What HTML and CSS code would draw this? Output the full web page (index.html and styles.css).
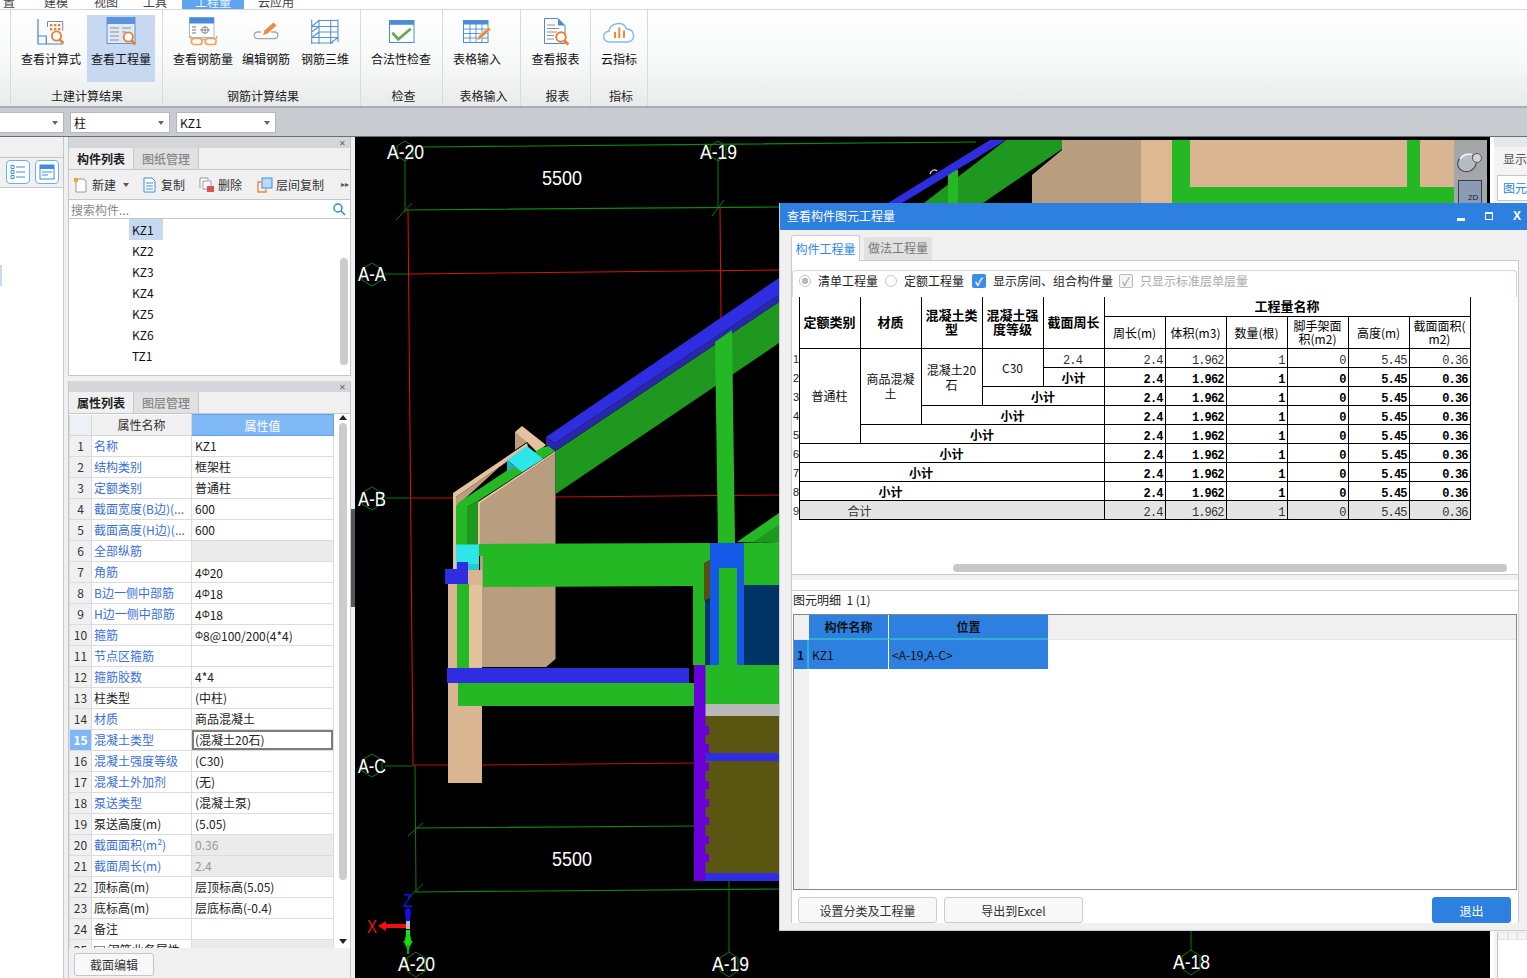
FILE: index.html
```html
<!DOCTYPE html>
<html lang="zh">
<head>
<meta charset="utf-8">
<title>查看构件图元工程量</title>
<link rel="stylesheet" href="styles.css">
</head>
<body>
<div class="app">
  <div class="menubar">
    <span class="mi m0">置</span><span class="mi m1">建模</span><span class="mi m2">视图</span><span class="mi m3">工具</span><span class="mi m4 active">工程量</span><span class="mi m5">云应用</span>
  </div>
  <div class="ribbon">
    <div class="group g1">
      <div class="btns">
        <div class="rb w72"><svg class="ic" viewBox="0 0 32 30"><path d="M3 2v25h25M3 19h8.300v8" fill="none" stroke="#3f86d8" stroke-width="1.2"/><path d="M12.500 10V4.500h15.200V14" fill="none" stroke="#6d8fb8"/><g fill="#e8823a"><rect x="15" y="7" width="2.400" height="2.400"/><rect x="19" y="7" width="2.400" height="2.400"/><rect x="23" y="7" width="2.400" height="2.400"/><rect x="15" y="11" width="2.400" height="2.400"/><rect x="19" y="11" width="2.400" height="2.400"/><rect x="23" y="11" width="2.400" height="2.400"/></g><circle cx="21.500" cy="19" r="4.600" fill="#fff" stroke="#e8823a" stroke-width="1.900"/><path d="M24.800 22.500l3.700 4" stroke="#e8823a" stroke-width="2.600"/></svg><span>查看计算式</span></div>
        <div class="rb w68 on"><svg class="ic" viewBox="0 0 32 30"><rect x="2" y="0.500" width="28" height="26" fill="#dfe8f4" stroke="#5a94dc"/><rect x="2" y="0.500" width="28" height="6.500" fill="#5a94dc"/><path d="M5 11h9M5 15h9M5 19h9M5 23h9M17 11h9M17 15h4" stroke="#8a8f96"/><circle cx="23.300" cy="20" r="4.600" fill="#fff" stroke="#e8823a" stroke-width="1.900"/><path d="M26.500 23.500l3.700 4" stroke="#e8823a" stroke-width="2.600"/></svg><span>查看工程量</span></div>
      </div>
      <div class="glabel">土建计算结果</div>
    </div>
    <div class="group g2">
      <div class="btns">
        <div class="rb w66"><svg class="ic" viewBox="0 0 32 30"><rect x="2.500" y="0.500" width="24.500" height="20" fill="#fff" stroke="#9db8da"/><rect x="2.500" y="0.500" width="24.500" height="6" fill="#4a8cd8"/><path d="M5 10h4M5 13h4M5 16h4" stroke="#777"/><path d="M13 13h10M18 9v8" stroke="#888"/><rect x="15" y="10" width="6" height="6" rx="2" fill="none" stroke="#888"/><rect x="4.500" y="21.500" width="10.500" height="6" rx="2.500" fill="#fff" stroke="#f5a060" stroke-width="1.700"/><rect x="18.500" y="21.500" width="10.500" height="6" rx="2.500" fill="#fff" stroke="#f5a060" stroke-width="1.700"/><path d="M15 22.500h3.500M4.500 22l-1-3M29 22l1-3" stroke="#f5a060" stroke-width="1.500" fill="none"/></svg><span>查看钢筋量</span></div>
        <div class="rb w60"><svg class="ic" viewBox="0 0 32 30"><path d="M11 15H7.500a3.300 3.300 0 0 0 0 6.600h17a3.300 3.300 0 0 0 0-6.600H21" fill="none" stroke="#a4a8ac" stroke-width="1.300"/><path d="M13 18l1.500-4.500 9-8 3 3-9 8z" fill="#ee8a3a"/></svg><span>编辑钢筋</span></div>
        <div class="rb w58"><svg class="ic" viewBox="0 0 32 30"><path d="M2.700 2.500V27M10 2.500V27M21.700 2.500V27M29 2.500V25M10 3.500H29M2.700 9.500H29M10 15H29M2.700 20.500H29M2.700 26H24M2.700 9.500L10 3.500M2.700 20.500L10 15M2.700 15L10 9.500M21.700 26L29 20.500" fill="none" stroke="#5a92d6" stroke-width="1.100"/></svg><span>钢筋三维</span></div>
      </div>
      <div class="glabel">钢筋计算结果</div>
    </div>
    <div class="group g3">
      <div class="btns">
        <div class="rb w80"><svg class="ic" viewBox="0 0 32 30"><rect x="4.500" y="3.500" width="24.500" height="22" fill="#fff" stroke="#4a8cd8"/><rect x="4.500" y="3.500" width="24.500" height="4.300" fill="#4a8cd8"/><path d="M7.300 15.700l6 6.600 12.400-10.600" fill="none" stroke="#6fa84f" stroke-width="2.800"/></svg><span>合法性检查</span></div>
      </div>
      <div class="glabel">检查</div>
    </div>
    <div class="group g4">
      <div class="btns">
        <div class="rb w68"><svg class="ic" viewBox="0 0 32 30"><rect x="2.500" y="3.500" width="24.500" height="22" fill="#fff" stroke="#4a8cd8"/><rect x="2.500" y="3.500" width="24.500" height="4" fill="#4a8cd8"/><path d="M2.500 12h24.500M2.500 16.500h24.500M2.500 21h24.500M9 7v18.500M15 7v18.500M21 7v18.500" stroke="#4a8cd8" stroke-width=".9"/><path d="M15.500 24l2-5 10-9 2.500 2.500-10 9z" fill="#ee8a3a" stroke="#fff" stroke-width=".5"/></svg><span>表格输入</span></div>
      </div>
      <div class="glabel">表格输入</div>
    </div>
    <div class="group g5">
      <div class="btns">
        <div class="rb wfull"><svg class="ic" viewBox="0 0 32 30"><path d="M4.500 1.500h13.500l7 7v18H4.500z" fill="#fff" stroke="#4a8cd8"/><path d="M18 1.500l7 7h-7z" fill="#4a8cd8"/><path d="M7 8h8M7 11.500h12M7 15h10M7 18.500h7M7 22h7" stroke="#8a8f96"/><circle cx="21" cy="20" r="4.800" fill="#fff" stroke="#ee7a30" stroke-width="1.900"/><path d="M24.300 23.500l4 4" stroke="#ee7a30" stroke-width="2.600"/></svg><span>查看报表</span></div>
      </div>
      <div class="glabel">报表</div>
    </div>
    <div class="group g6">
      <div class="btns">
        <div class="rb wfull"><svg class="ic" viewBox="0 0 32 30"><path d="M7 25c-8 0-8.500-10-1-10.800C7 6.500 20 3 23.500 12c9-.5 9.500 13 1 13z" fill="#fff" stroke="#7fbcf0" stroke-width="1.500"/><path d="M12 21v-6M16.300 21V10.500M21 21v-7.500" stroke="#ee8a3a" stroke-width="2"/></svg><span>云指标</span></div>
      </div>
      <div class="glabel">指标</div>
    </div>
  </div>
  <div class="selbar">
    <div class="sel s0"></div>
    <div class="sel s1">柱</div>
    <div class="sel s2">KZ1</div>
  </div>
  <div class="main">
    <aside class="side">
      <div class="side-top"></div>
      <div class="side-tools">
        <span class="stool"><svg viewBox="0 0 24 24" width="24" height="24"><path d="M10 7h9M10 12h9M10 17h9" stroke="#3b8ee0"/><path d="M5 5.500h3v3H5zM5 10.500h3v3H5zM5 15.500h3v3H5z" fill="none" stroke="#3b8ee0"/></svg></span>
        <span class="stool"><svg viewBox="0 0 24 24" width="24" height="24"><rect x="5" y="5" width="14" height="14" fill="#fff" stroke="#3b8ee0"/><rect x="5" y="5" width="14" height="4" fill="#3b8ee0"/><path d="M7 12h10M7 15h6" stroke="#3b8ee0"/></svg></span>
      </div>
      <div class="side-list"><div class="side-mark"></div></div>
    </aside>
    <div class="panels">
      <section class="panel p1">
        <div class="phead">✕</div>
        <div class="ptabs"><span class="ptab on">构件列表</span><span class="ptab">图纸管理</span></div>
        <div class="ptools">
          <span class="pt t1"><svg viewBox="0 0 16 16" width="16" height="16"><path d="M3 2h8l2 2v11H3z" fill="#fff" stroke="#999"/><rect x="1" y="1" width="4" height="4" fill="#f5a623"/></svg>新建<i class="caret"></i></span>
          <span class="pt t2"><svg viewBox="0 0 16 16" width="16" height="16"><path d="M2 1h8l3 3v11H2z" fill="#fff" stroke="#3b8ee0"/><path d="M4 6h7M4 9h7M4 12h7" stroke="#3b8ee0"/></svg>复制</span>
          <span class="pt t3"><svg viewBox="0 0 16 16" width="16" height="16"><path d="M4 4h8v8H4zM1 11V1h8v2" fill="#fff" stroke="#999"/><rect x="8" y="9" width="7" height="6" fill="#d9534f"/></svg>删除</span>
          <span class="pt t4"><svg viewBox="0 0 16 16" width="16" height="16"><rect x="5" y="1" width="10" height="10" fill="#bcd9f7" stroke="#3b8ee0"/><path d="M4 5H1v10h8v-3" fill="none" stroke="#ee8a3a" stroke-width="1.400"/></svg>层间复制</span>
          <span class="more">▸▸</span>
        </div>
        <div class="psearch"><span>搜索构件...</span><svg viewBox="0 0 14 14" width="14" height="14"><circle cx="6" cy="6" r="4" fill="none" stroke="#2a8fc8" stroke-width="1.500"/><path d="M9 9l4 4" stroke="#2a8fc8" stroke-width="1.600"/></svg></div>
        <div class="plist">
          <div class="li on"><span>KZ1</span></div>
          <div class="li"><span>KZ2</span></div>
          <div class="li"><span>KZ3</span></div>
          <div class="li"><span>KZ4</span></div>
          <div class="li"><span>KZ5</span></div>
          <div class="li"><span>KZ6</span></div>
          <div class="li"><span>TZ1</span></div>
          <div class="vthumb"></div>
        </div>
      </section>
      <section class="panel p2">
        <div class="phead">✕</div>
        <div class="ptabs"><span class="ptab on">属性列表</span><span class="ptab">图层管理</span></div>
        <div class="gridwrap">
          <table class="pgrid">
            <colgroup><col class="c0"><col class="c1"><col class="c2"></colgroup>
            <thead><tr><th class="nh"></th><th>属性名称</th><th class="hv">属性值</th></tr></thead>
            <tbody>
              <tr><td class="n">1</td><td class="b">名称</td><td>KZ1</td></tr>
              <tr><td class="n">2</td><td class="b">结构类别</td><td>框架柱</td></tr>
              <tr><td class="n">3</td><td class="b">定额类别</td><td>普通柱</td></tr>
              <tr><td class="n">4</td><td class="b">截面宽度(B边)(...</td><td>600</td></tr>
              <tr><td class="n">5</td><td class="b">截面高度(H边)(...</td><td>600</td></tr>
              <tr><td class="n">6</td><td class="b">全部纵筋</td><td class="g"></td></tr>
              <tr><td class="n">7</td><td class="b">角筋</td><td>4<i class="rb-s">Φ</i>20</td></tr>
              <tr><td class="n">8</td><td class="b">B边一侧中部筋</td><td>4<i class="rb-s">Φ</i>18</td></tr>
              <tr><td class="n">9</td><td class="b">H边一侧中部筋</td><td>4<i class="rb-s">Φ</i>18</td></tr>
              <tr><td class="n">10</td><td class="b">箍筋</td><td><i class="rb-s">Φ</i>8@100/200(4*4)</td></tr>
              <tr><td class="n">11</td><td class="b">节点区箍筋</td><td></td></tr>
              <tr><td class="n">12</td><td class="b">箍筋胶数</td><td>4*4</td></tr>
              <tr><td class="n">13</td><td class="k">柱类型</td><td>(中柱)</td></tr>
              <tr><td class="n">14</td><td class="b">材质</td><td>商品混凝土</td></tr>
              <tr><td class="n cur">15</td><td class="b">混凝土类型</td><td class="edit">(混凝土20石)</td></tr>
              <tr><td class="n">16</td><td class="b">混凝土强度等级</td><td>(C30)</td></tr>
              <tr><td class="n">17</td><td class="b">混凝土外加剂</td><td>(无)</td></tr>
              <tr><td class="n">18</td><td class="b">泵送类型</td><td>(混凝土泵)</td></tr>
              <tr><td class="n">19</td><td class="k">泵送高度(m)</td><td>(5.05)</td></tr>
              <tr><td class="n">20</td><td class="b">截面面积(m²)</td><td class="g dim">0.36</td></tr>
              <tr><td class="n">21</td><td class="b">截面周长(m)</td><td class="g dim">2.4</td></tr>
              <tr><td class="n">22</td><td class="k">顶标高(m)</td><td>层顶标高(5.05)</td></tr>
              <tr><td class="n">23</td><td class="k">底标高(m)</td><td>层底标高(-0.4)</td></tr>
              <tr><td class="n">24</td><td class="k">备注</td><td></td></tr>
              <tr><td class="n">25</td><td class="k"><i class="plus">+</i> 钢筋业务属性</td><td class="g"></td></tr>
            </tbody>
          </table>
          <div class="gscroll"><i class="up"></i><i class="thumb"></i><i class="down"></i></div>
        </div>
        <div class="pfoot"><span class="fbtn">截面编辑</span></div>
      </section>
    </div>
    <div class="split"><i></i></div>
    <div class="canvas">
      <svg class="scene" viewBox="355 137 1135 841" width="1135" height="841">
        <g fill="none" stroke-width="1">
          <path d="M423 147L976 142M405 210L779 207M415 828L694 826M415 892L779 889" stroke="#0d8a0d" stroke-width="1.200"/>
          <path d="M405 158V212M718 158V207M415 765L416 892M729 881V952M1191 931V950M396 220L412 203M712 216L724 200M408 836L423 823M408 898L423 884" stroke="#0d7a0d"/>
          <path d="M408 210L413 765M720 208L721 318" stroke="#e01010"/>
          <path d="M408 274L780 270" stroke="#d81010"/>
          <path d="M410 498L453 498M555 497L780 495M413 765L449 765M482 765L694 763" stroke="#c80e0e"/>
          <path d="M385 274H408M385 498H410M385 766H413" stroke="#0d7a0d"/>
          <path d="M405 141l8 5v10l-8 5-8-5v-10zM718 141l8 5v10l-8 5-8-5v-10zM372 263l10 6v11l-10 6-10-6v-11zM372 487l10 6v11l-10 6-10-6v-11zM372 754l10 6v11l-10 6-10-6v-11zM416 952l9 6v13l-9 6-9-6v-13zM729 952l9 6v13l-9 6-9-6v-13zM1191 950l9 6v13l-9 6-9-6v-13z" stroke="#0d7a0d"/>
        </g>
        <!-- upper right structure -->
        <path d="M1032 203V175L1062 150V140H1141V203Z" fill="#b89d7f"/>
        <rect x="1141" y="140" width="31" height="63" fill="#ddb892"/>
        <rect x="1190" y="140" width="265" height="47" fill="#d9b591"/>
        <rect x="1172" y="140" width="18" height="63" fill="#24b824"/>
        <rect x="1407" y="140" width="13" height="63" fill="#24b824"/>
        <rect x="1172" y="187" width="283" height="16" fill="#24b824"/>
        <path d="M924 203L1006 140H1062V149L983 203Z" fill="#1f981f"/>
        <rect x="948" y="170" width="10" height="33" fill="#24b824"/>
        <path d="M888 203L990 140H1006L902 203Z" fill="#2e2ee0"/>
        <path d="M930 174c1-4 5-5 7-3" fill="none" stroke="#ddd" stroke-width="1.200"/>
        <!-- tan wall -->
        <rect x="453" y="493" width="3" height="80" fill="#e3c29e"/>
        <path d="M453 493L527 443L528 447L456 497Z" fill="#e3c29e"/>
        <path d="M456 497L528 447L507 460L458 505L456 507Z" fill="#b89d7f"/>
        <path d="M515 432L527 434V442L515 450Z" fill="#b89d7f"/>
        <path d="M515 432L522 426L546 445L537 452L527 442Z" fill="#e3c29e"/>
        <path d="M478 502L555.500 451V453L480 504V545H478Z" fill="#e3c29e"/>
        <path d="M480 503L555.500 453V659L546 667H480Z" fill="#b89d7f"/>
        <rect x="448" y="570" width="34" height="213" fill="#d9b591"/>
        <rect x="469" y="585" width="13" height="82" fill="#e3c29e"/>
        <!-- main diagonal beam -->
        <path d="M555.500 451L779 302V343L555.500 494Z" fill="#1f981f"/>
        <path d="M546 437L779 278V295L555 443Z" fill="#2e2ee0"/>
        <path d="M555 443L779 295V302L555 451L546 445V437Z" fill="#2828a8"/>
        <path d="M456 507L458 503L541 448L548 446L555 451L478 501L467 507Z" fill="#24b824"/>
        <rect x="456" y="507" width="11" height="38" fill="#24b824"/>
        <path d="M467 507L478 501V545H467Z" fill="#1f981f"/>
        <path d="M507 460L527 446L543 459L522 472Z" fill="#2ee6ea"/>
        <path d="M507 460L522 472L514 467L507 472Z" fill="#2aa8c0"/>
        <rect x="456" y="544.500" width="23" height="25.500" fill="#2ee6ea"/>
        <rect x="468" y="564" width="11" height="6" fill="#28c8d0"/>
        <rect x="445" y="569" width="23" height="15" fill="#2e2ee0"/>
        <rect x="457" y="562" width="11" height="8" fill="#2e2ee0"/>
        <rect x="457" y="584" width="12" height="84" fill="#24b824"/>
        <!-- vertical + portal -->
        <path d="M715 342L732 330L735 543H718Z" fill="#24b824"/>
        <path d="M479 544L710 543V665H693V586L483 587V556H479Z" fill="#24b824"/>
        <rect x="705" y="586" width="5" height="79" fill="#003366"/>
        <rect x="744" y="585" width="35" height="80" fill="#003366"/>
        <path d="M744 543H779V585H744Z" fill="#24b824"/>
        <path d="M737 542L779 513V543Z" fill="#24b824"/>
        <path d="M753 542L779 525V542Z" fill="#1f981f"/>
        <path d="M704 563L714 557V596L704 601Z" fill="#55500f"/>
        <rect x="710" y="568" width="9" height="97" fill="#1558e6"/>
        <rect x="737" y="568" width="7" height="97" fill="#1558e6"/>
        <rect x="719" y="568" width="18" height="97" fill="#24b824"/>
        <rect x="710" y="543" width="34" height="25" fill="#1558e6"/>
        <!-- lower beam -->
        <rect x="458" y="683" width="237" height="23" fill="#24b824"/>
        <rect x="447" y="668" width="242" height="15" fill="#2e2ee0"/>
        <rect x="705" y="665" width="74" height="39" fill="#24b824"/>
        <rect x="705" y="704" width="74" height="12" fill="#b9b9b9"/>
        <rect x="705" y="716" width="74" height="157" fill="#5a5612"/>
        <rect x="705" y="753" width="74" height="8" fill="#2e2ee0"/>
        <rect x="705" y="873" width="74" height="8" fill="#2e2ee0"/>
        <rect x="694" y="665" width="11.500" height="216" fill="#6a00d8"/>
        <path d="M705 726h4v9h-4zM705 744h4v9h-4zM705 763h4v8h-4zM705 781h4v8h-4zM705 799h4v8h-4zM705 817h4v8h-4zM705 836h4v8h-4zM705 854h4v8h-4z" fill="#6a00d8"/>
        <!-- labels -->
        <text class="lbl" x="387" y="159" textLength="37" lengthAdjust="spacingAndGlyphs">A-20</text>
        <text class="lbl" x="700" y="159" textLength="37" lengthAdjust="spacingAndGlyphs">A-19</text>
        <text class="lbl" x="358" y="281" textLength="28" lengthAdjust="spacingAndGlyphs">A-A</text>
        <text class="lbl" x="358" y="506" textLength="28" lengthAdjust="spacingAndGlyphs">A-B</text>
        <text class="lbl" x="358" y="773" textLength="28" lengthAdjust="spacingAndGlyphs">A-C</text>
        <text class="lbl" x="398" y="971" textLength="37" lengthAdjust="spacingAndGlyphs">A-20</text>
        <text class="lbl" x="712" y="971" textLength="37" lengthAdjust="spacingAndGlyphs">A-19</text>
        <text class="lbl" x="1173" y="969" textLength="37" lengthAdjust="spacingAndGlyphs">A-18</text>
        <text class="lbl" x="542" y="185" textLength="40" lengthAdjust="spacingAndGlyphs">5500</text>
        <text class="lbl" x="552" y="866" textLength="40" lengthAdjust="spacingAndGlyphs">5500</text>
        <!-- axis gizmo -->
        <rect x="406" y="910" width="4" height="12" fill="#1010f0"/>
        <ellipse cx="408" cy="913" rx="3" ry="5" fill="#1010f0"/>
        <rect x="406" y="921" width="4" height="8" fill="#bbb"/>
        <rect x="406" y="930" width="4" height="9" fill="#20e020"/>
        <ellipse cx="408" cy="940" rx="3" ry="6" fill="#10e010"/>
        <path d="M402 924H386V921L378 926L386 931V928H406V924Z" fill="#f01010"/>
        <text class="ax xr" x="367" y="933" textLength="10" lengthAdjust="spacingAndGlyphs">X</text>
        <text class="ax zb" x="403" y="907" textLength="10" lengthAdjust="spacingAndGlyphs">Z</text>
        <text class="ax yg" x="403" y="954" textLength="10" lengthAdjust="spacingAndGlyphs">Y</text>
        <!-- view cube -->
        <rect x="1454" y="140" width="33" height="63" fill="#a4a6a8"/>
        <ellipse cx="1467" cy="163" rx="9.500" ry="8.500" fill="#b4bcc4" stroke="#4a4e54" stroke-width="1.200" transform="rotate(-25 1467 163)"/>
        <circle cx="1477" cy="158" r="4.500" fill="#d0d4da" stroke="#55585e"/>
        <path d="M1460 159c2-4 8-6 12-4" fill="none" stroke="#eef0f2" stroke-width="2"/>
        <rect x="1458.500" y="180.500" width="23" height="23" fill="#8a9cb4" stroke="#333c48"/>
        <text class="d2" x="1468" y="200">2D</text>
      </svg>
    </div>
    <aside class="right">
      <div class="r-top"></div>
      <div class="r-tab">显示</div>
      <div class="r-tab2">图元</div>
      <div class="r-bottom"><i></i><i></i><i></i></div>
    </aside>
  </div>

  <div class="dialog">
    <div class="dlg-title">
      <span class="dlg-name">查看构件图元工程量</span>
      <span class="wc"><i class="min"></i></span><span class="wc wmax"><i class="max"></i></span><span class="wc close">X</span>
    </div>
    <div class="dlg-tabs"><span class="dt on">构件工程量</span><span class="dt">做法工程量</span></div>
    <div class="dlg-panel">
      <div class="opts">
        <i class="radio r1"></i><span class="ol l1">清单工程量</span>
        <i class="radio r2"></i><span class="ol l2">定额工程量</span>
        <i class="chk c1">✓</i><span class="ol l3">显示房间、组合构件量</span>
        <i class="chk c2">✓</i><span class="ol l4">只显示标准层单层量</span>
      </div>
      <div class="tablearea">
        <table class="qty">
          <colgroup><col class="rn"><col span="11" class="qc"></colgroup>
          <thead>
            <tr class="h1"><th class="rnc"></th><th rowspan="2">定额类别</th><th rowspan="2">材质</th><th rowspan="2">混凝土类型</th><th rowspan="2">混凝土强度等级</th><th rowspan="2">截面周长</th><th colspan="6" class="big">工程量名称</th></tr>
            <tr class="h2"><th class="rnc"></th><th class="sub">周长(m)</th><th class="sub">体积(m3)</th><th class="sub">数量(根)</th><th class="sub">脚手架面<br>积(m2)</th><th class="sub">高度(m)</th><th class="sub">截面面积(<br>m2)</th></tr>
          </thead>
          <tbody>
            <tr class="thin"><td class="rnc">1</td><td rowspan="5" class="tx">普通柱</td><td rowspan="4" class="tx">商品混凝土</td><td rowspan="3" class="tx">混凝土20石</td><td rowspan="2" class="tx">C30</td><td class="ctr">2.4</td><td>2.4</td><td>1.962</td><td>1</td><td>0</td><td>5.45</td><td>0.36</td></tr>
            <tr><td class="rnc">2</td><td class="sum">小计</td><td>2.4</td><td>1.962</td><td>1</td><td>0</td><td>5.45</td><td>0.36</td></tr>
            <tr><td class="rnc">3</td><td colspan="2" class="sum">小计</td><td>2.4</td><td>1.962</td><td>1</td><td>0</td><td>5.45</td><td>0.36</td></tr>
            <tr><td class="rnc">4</td><td colspan="3" class="sum">小计</td><td>2.4</td><td>1.962</td><td>1</td><td>0</td><td>5.45</td><td>0.36</td></tr>
            <tr><td class="rnc">5</td><td colspan="4" class="sum">小计</td><td>2.4</td><td>1.962</td><td>1</td><td>0</td><td>5.45</td><td>0.36</td></tr>
            <tr><td class="rnc">6</td><td colspan="5" class="sum">小计</td><td>2.4</td><td>1.962</td><td>1</td><td>0</td><td>5.45</td><td>0.36</td></tr>
            <tr><td class="rnc">7</td><td colspan="5" class="sum s7">小计</td><td>2.4</td><td>1.962</td><td>1</td><td>0</td><td>5.45</td><td>0.36</td></tr>
            <tr><td class="rnc">8</td><td colspan="5" class="sum s8">小计</td><td>2.4</td><td>1.962</td><td>1</td><td>0</td><td>5.45</td><td>0.36</td></tr>
            <tr class="thin tot"><td class="rnc">9</td><td colspan="5" class="s9">合计</td><td>2.4</td><td>1.962</td><td>1</td><td>0</td><td>5.45</td><td>0.36</td></tr>
          </tbody>
        </table>
        <div class="hscroll"></div>
      </div>
      <div class="band"></div>
      <div class="detail">
        <div class="dlabel">图元明细&nbsp; 1 (1)</div>
        <div class="dgrid">
          <div class="dhead"><span class="dc d1">构件名称</span><span class="dc d2h">位置</span></div>
          <div class="drow"><span class="dn">1</span><span class="dv v1">KZ1</span><span class="dv v2">&lt;A-19,A-C&gt;</span></div>
        </div>
      </div>
      <div class="dfoot">
        <span class="dbtn">设置分类及工程量</span>
        <span class="dbtn">导出到Excel</span>
        <span class="dbtn exit">退出</span>
      </div>
    </div>
  </div>
</div>
</body>
</html>
```
FILE: styles.css
```css
*{box-sizing:border-box}
html,body{margin:0;padding:0;background:#f0f0f0}
body{font-family:"Noto Sans CJK SC","Liberation Sans",sans-serif;font-size:12px;color:#111}
i{font-style:normal}
.app{position:relative;width:1527px;height:978px;overflow:hidden;display:flex;flex-direction:column}

.menubar{height:10px;background:#fff;border-bottom:1px solid #d4d6da;display:flex;align-items:flex-end;overflow:hidden;position:relative;flex:none}
.mi{display:block;height:10px;line-height:6px;font-size:12px;color:#444;overflow:hidden;text-align:center}
.m0{width:18px}.m1{width:26px;margin-left:25px}.m2{width:26px;margin-left:24px}.m3{width:26px;margin-left:23px}
.m4{width:62px;margin-left:14px;background:#5ea6f0;color:#e8f2ff}
.m5{width:40px;margin-left:12px}

.ribbon{height:98px;flex:none;display:flex;padding-left:10px;background:linear-gradient(#fff,#f7f8f8 55%,#e9ebeb);border-bottom:2px solid #a9adb2}
.group{display:flex;flex-direction:column;border-left:1px solid #d8dadc;height:96px}
.g1{width:152px;padding-left:4px}.g2{width:198px;padding-left:7px}.g3{width:82px}.g4{width:78px}.g5{width:70px}.g6{width:58px;border-right:1px solid #d8dadc}
.btns{display:flex;height:72px;padding-top:5px;flex:none}
.rb{display:flex;flex-direction:column;align-items:center;height:67px;white-space:nowrap}
.rb.on{background:#c7d9f1}
.rb span{line-height:16px;margin-top:4px}
.ic{width:32px;height:30px;margin-top:2px;flex:none}
.w72{width:72px}.w68{width:68px}.w66{width:66px}.w60{width:60px}.w58{width:58px}.w80{width:80px}.wfull{width:100%}
.glabel{text-align:center;line-height:16px;margin-top:6px;color:#222;padding-left:4px}
.g1 .glabel{padding:0 3px 0 0}
.g2 .glabel{padding:0 4px 0 0}

.selbar{height:28px;flex:none;background:#c8ccd0;display:flex;align-items:center;gap:6px;padding-top:1px}
.sel{height:21px;background:#fff;border:1px solid #b4b6ba;padding-left:3px;line-height:19px;position:relative;font-size:12px}
.sel::after{content:"";position:absolute;right:5px;top:8px;border:3px solid transparent;border-top:4px solid #666}
.s0{width:64px;border-left:0}.s1{width:100px}.s2{width:100px}

.main{flex:1;display:flex;min-height:0;background:#f0f0f0;border-top:1px solid #6b6e72}
.side{width:64px;flex:none;border-right:1px solid #c3c6ca;background:#fff;display:flex;flex-direction:column}
.side-top{height:21px;background:#f0f0f0;border-bottom:1px solid #c3c6ca;flex:none}
.side-tools{background:#f0f0f0;border-bottom:1px solid #c3c6ca;display:flex;gap:5px;padding:2px 0 0 6px;height:30px;flex:none}
.stool{width:24px;height:24px;border:1px solid #6cb0ee;border-radius:4px;display:block;overflow:hidden;background:#fff}
.stool svg{display:block;margin:-1px}
.side-list{flex:1;padding-top:77px;background:#fff}
.side-mark{width:2px;height:21px;background:#c7d9f1}

.panels{width:283px;margin-left:4px;flex:none;display:flex;flex-direction:column;gap:5px}
.panel{display:flex;flex-direction:column;background:#fff}
.p1{height:239px;flex:none;border:1px solid #c3c6ca;border-top:0}
.p2{flex:1;min-height:0;border:1px solid #c3c6ca;border-bottom:0;border-top:0;background:#f0f0f0}
.phead{height:11px;background:#d4d6da;text-align:right;padding-right:4px;font-size:8px;line-height:11px;color:#666;flex:none}
.ptabs{height:22px;background:#f0f0f0;border-bottom:1px solid #c3c6ca;display:flex;flex:none}
.ptab{width:65px;text-align:center;line-height:21px;background:#e1e1e1;color:#888;border-right:1px solid #c3c6ca;font-weight:500}
.ptab.on{background:#f0f0f0;color:#222;width:65px;font-weight:700}
.ptools{height:30px;background:#f0f0f0;border-bottom:1px solid #c3c6ca;display:flex;align-items:center;position:relative;flex:none;padding-left:4px;color:#333}
.pt{display:flex;align-items:center;gap:3px;white-space:nowrap}
.t1{width:69px}.t2{width:57px}.t3{width:58px}.t4{width:auto}
.caret{border:3px solid transparent;border-top:4px solid #555;margin:4px 0 0 4px}
.more{position:absolute;right:1px;top:8px;font-size:8px;color:#555}
.psearch{height:19px;background:#fff;border-bottom:1px solid #c3c6ca;display:flex;align-items:center;justify-content:space-between;padding:0 4px 0 2px;color:#888;flex:none}
.plist{flex:1;position:relative;background:#fff;font-size:12px}
.li{height:21px;padding-left:60px;line-height:21px;color:#111}
.li span{display:inline-block;width:34px;padding-left:3px}
.li.on span{background:#c7d9f1}
.vthumb{position:absolute;right:2px;top:39px;width:8px;height:107px;border-radius:4px;background:#ccc}

.gridwrap{height:534px;display:flex;overflow:hidden;flex:none;background:#fff}
.pgrid{width:264px;table-layout:fixed;border-collapse:collapse;flex:none;align-self:flex-start}
.c0{width:22px}.c1{width:100px}.c2{width:142px}
.pgrid th{height:21px;padding:0;background:#f0f0f0;font-weight:400;border:1px solid #d4d6da;border-top:0;color:#333}
.pgrid th.hv{background:#7fb8f4;color:#fff;border:1px solid #5ea6f0}
.pgrid th.nh{background:#edf0f4}
.pgrid td{height:21px;padding:0 0 0 3px;border:1px solid #dcdcdc;white-space:nowrap;overflow:hidden;color:#222;line-height:16px}
.pgrid td.n{background:#f0f0f0;text-align:center;padding:0;color:#333}
.pgrid td.cur{background:#7fb8f4;color:#fff;font-weight:700}
.pgrid td.b{color:#3a6fd8;padding-left:2px}
.pgrid td.k{padding-left:2px}
.pgrid td.g{background:#ebebeb}
.pgrid td.dim{color:#999}
.pgrid td.edit{box-shadow:inset 0 0 0 2px #7d7d7d}
.rb-s{font-size:10px;vertical-align:2px}
.plus{display:inline-block;width:11px;height:11px;border:1px solid #888;line-height:8px;text-align:center;font-size:10px}
.gscroll{width:17px;position:relative;background:#fff;flex:none}
.gscroll .up,.gscroll .down{position:absolute;left:5px;border:4px solid transparent}
.gscroll .up{top:-3px;border-bottom:5px solid #222}
.gscroll .down{bottom:0;border-top:5px solid #222}
.gscroll .thumb{position:absolute;left:5px;top:9px;width:8px;height:457px;border-radius:4px;background:#ccc}
.pfoot{flex:1;background:#f0f0f0;padding:5px 0 0 5px}
.fbtn{display:block;width:80px;height:23px;line-height:21px;text-align:center;border:1px solid #c3c6ca;border-radius:3px;background:#f8f8f8;color:#333}

.split{width:4px;flex:none;padding-top:372px}
.split i{display:block;width:4px;height:98px;background:#55585c}

.canvas{width:1135px;flex:none;background:#000;overflow:hidden}
.scene{display:block}
.lbl{fill:#fff;font:20px "Liberation Sans",sans-serif}
.ax{font:18px "Liberation Sans",sans-serif}
.xr{fill:#f01010}.zb{fill:#1010f0}.yg{fill:#10e010}
.d2{fill:#222;font:8px "Liberation Sans",sans-serif}

.right{flex:1;background:#f4f4f4;border-left:4px solid #fff;display:flex;flex-direction:column;min-width:0;overflow:hidden}
.r-top{height:10px;background:#e6e8ec;flex:none}
.r-tab{height:20px;line-height:18px;color:#555;white-space:nowrap;overflow:hidden;margin-top:3px;padding-left:9px;flex:none}
.r-tab2{margin:5px 0 0 3px;height:26px;border:1px solid #c3c6ca;border-right:0;background:#fff;line-height:24px;color:#2d7fe0;padding-left:5px;white-space:nowrap;overflow:hidden;flex:none}
.r-bottom{margin:auto 0 0 3px;height:46px;background:#fff;border-left:1px solid #c3c6ca;display:flex;flex:none}
.r-bottom i{display:block;width:10px;height:8px;border:1px solid #e4e4e4;background:#f4f4f4}

.dialog{position:absolute;left:779px;top:203px;width:748px;height:728px;background:#f0f0f0;border-left:1px solid #c8ccd8;border-bottom:1px solid #c8ccd8;display:flex;flex-direction:column}
.dlg-title{height:27px;flex:none;background:#2d7fe0;color:#fff;display:flex;align-items:center;padding:0 0 2px 7px}
.dlg-name{flex:1}
.wc{width:28px;text-align:center;font-size:11px;display:flex;justify-content:center;align-items:center;height:25px}
.wc .min{display:block;width:8px;height:3px;background:#fff;margin-top:8px}
.wc .max{display:block;width:8px;height:8px;border:1px solid #fff;border-top-width:2px}
.wmax{margin-right:4px}
.close{width:20px;font-weight:700;font-size:12px;font-family:"Liberation Sans",sans-serif}
.dlg-tabs{height:30px;flex:none;padding:4px 0 0 11px;display:flex;align-items:flex-end;gap:4px}
.dt{width:68px;height:23px;line-height:22px;text-align:center;background:#e1e1e1;color:#777;border-radius:3px 3px 0 0}
.dt.on{width:69px;height:26px;line-height:26px;background:#fff;color:#2d88e8;border:1px solid #c8ccd0;border-bottom:0;position:relative;margin-bottom:-1px}
.dlg-panel{margin:0 8px 0 11px;height:663px;background:#fff;border:1px solid #c8ccd0;border-bottom:0;display:flex;flex-direction:column;flex:none}
.opts{margin:9px 1px 0 0;height:27px;flex:none;border:1px solid #d4d6da;border-bottom:0;border-radius:4px 4px 0 0;display:flex;align-items:center;padding-bottom:7px;color:#222}
.radio{width:12px;height:12px;border-radius:50%;border:1px solid #c3c6ca;flex:none;background:#fff;display:block}
.r1{margin-left:6px;background:radial-gradient(circle,#bbb 3px,#fff 3.500px)}
.r2{margin-left:7px}
.ol{white-space:nowrap}
.l1{margin-left:7px}.l2{margin-left:7px}.l3{margin-left:7px}.l4{margin-left:7px;color:#aaa}
.chk{width:14px;height:14px;border-radius:2px;flex:none;text-align:center;line-height:14px;font-size:11px;color:#fff;background:#3b8ee8;margin-left:8px;font-weight:700}
.chk.c2{background:#f4f4f4;border:1px solid #bbb;color:#aaa;line-height:12px;margin-left:6px}
.tablearea{height:278px;flex:none;display:flex;flex-direction:column;border-bottom:1px solid #c8ccd0}
.qty{width:678px;table-layout:fixed;border-collapse:collapse;flex:none;color:#000}
.rn{width:7px}.qc{width:61px}
.qty th,.qty td{border:1px solid #000;padding:0;text-align:center;vertical-align:middle;overflow:hidden;word-break:break-all}
.qty th{font-weight:700;font-size:13px;line-height:14px}
.h1 th{height:19px;border-top:0}
.h2 th{height:32px}
.qty th.sub{font-weight:400;font-size:12px;line-height:13px}
.qty th.big{font-size:13px}
.qty .rnc{border:0;border-right:1px solid #000;font-size:11px;overflow:visible;font-family:"Liberation Sans",sans-serif;font-weight:400;color:#222}
.qty tbody td{height:19px;line-height:12px;text-align:right;padding:6px 2px 0 0;font-family:"Liberation Mono",monospace;font-size:12px;letter-spacing:-.9px;font-weight:700}
.qty tbody .thin td{font-weight:400;color:#333}
.qty tbody td.rnc{font-weight:400;letter-spacing:0;padding:2px 0 0 1px;line-height:16px;text-align:left;font-family:"Liberation Sans",sans-serif;font-size:11px}
.qty tbody td.tx{text-align:center;font-family:"Noto Sans CJK SC",sans-serif;font-size:12px;font-weight:400;letter-spacing:0;line-height:15px;color:#111;padding:0 2px}
.qty tbody td.ctr{text-align:center}
.qty tbody td.sum{text-align:center;font-family:"Noto Sans CJK SC",sans-serif;font-weight:700;font-size:12px;letter-spacing:0;padding:2px 0 0;line-height:16px}
.qty tbody td.s7{padding-right:61px}
.qty tbody td.s8{padding-right:122px}
.qty tbody td.s9{text-align:left;padding:2px 0 0 48px;line-height:16px;font-family:"Noto Sans CJK SC",sans-serif;letter-spacing:0}
.tot td{background:#e4e4e4}
.qty tbody .tot td.rnc{background:#fff}
.hscroll{margin:auto 11px 2px 161px;height:8px;border-radius:4px;background:#c8c8c8;flex:none}
.band{height:15px;flex:none;background:linear-gradient(#f0f0f0 5px,#fff 5px)}
.detail{height:300px;flex:none;border-top:1px solid #c8ccd0;display:flex;flex-direction:column}
.dlabel{height:23px;line-height:18px;padding-left:1px;color:#222;flex:none}
.dgrid{margin:0 1px;height:276px;flex:none;border:1px solid #888;background:linear-gradient(to right,#f0f0f0 15px,#fff 15px)}
.dhead{height:25px;background:#f0f0f0;border-bottom:1px solid #e4e4e4;padding-left:15px;display:flex}
.dc{display:block;height:25px;background:#2d7fe0;border-bottom:2px solid #33b0d0;text-align:center;font-weight:700;line-height:24px;color:#111}
.d1{width:80px;border-right:1px solid #fff}.d2h{width:159px}
.drow{height:29px;display:flex}
.dn{width:15px;background:#2d7fe0;font-weight:700;text-align:center;line-height:29px;border-right:2px solid #33b0d0}
.dv{background:#2d7fe0;line-height:29px;padding-left:3px;color:#111}
.v1{width:80px;border-right:1px solid #fff}.v2{width:159px}
.dfoot{flex:1;display:flex;align-items:flex-start;padding:7px 7px 0 6px;gap:7px}
.dbtn{display:block;width:139px;height:26px;line-height:25px;text-align:center;border:1px solid #c8ccd8;border-radius:3px;background:#f8f8f8;color:#333}
.exit{width:79px;margin-left:auto;background:#2d7fe0;border-color:#2d7fe0;color:#fff}
```
